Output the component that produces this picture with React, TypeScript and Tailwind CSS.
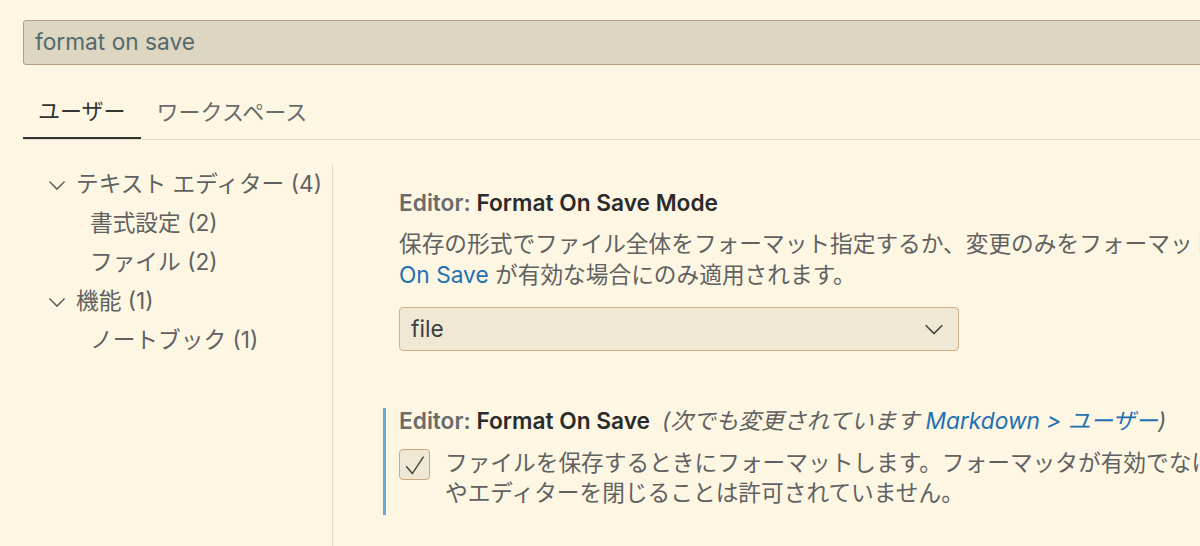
import React from "react";

const font = "font-['Inter','Noto_Sans_CJK_JP',sans-serif]";

function Chevron({ className }: { className?: string }) {
  return (
    <svg viewBox="0 0 16 16" className={className} fill="none" stroke="currentColor" strokeWidth="1.1">
      <path d="M2.5 5.5L8 11l5.5-5.5" />
    </svg>
  );
}

function TreeRow({ label, count, depth }: { label: string; count: number; depth: number }) {
  return (
    <div className="flex items-center h-[39px] whitespace-nowrap text-[#616161]">
      {depth === 0 ? (
        <>
          <Chevron className="w-[22px] h-[22px] ml-[23px] mr-[8px] shrink-0 text-[#616161]" />
          <span>
            {label} ({count})
          </span>
        </>
      ) : (
        <span className="ml-[67px]">
          {label} ({count})
        </span>
      )}
    </div>
  );
}

export default function App() {
  return (
    <div className={`w-[1200px] h-[546px] overflow-hidden bg-[#fdf6e3] text-[22.7px] ${font}`}>
      <div className="pt-[20px] pl-[23px]">
        <div className="w-[1200px] h-[45px] flex items-center pl-[11px] bg-[#ddd6c1] border border-[#b49e83] rounded-[3px] text-[#546a6d]">
          format on save
        </div>

        <div className="mt-[20px] flex w-[1200px] border-b border-[#e4ddca] text-[22px]">
          <div className="h-[54px] px-[15px] flex items-center -mb-px border-b-2 border-[#333333] text-[#333333]">
            ユーザー
          </div>
          <div className="h-[54px] px-[16px] flex items-center text-[#6b6b6b]">
            ワークスペース
          </div>
        </div>

        <div className="flex mt-[25px]">
          <div className="w-[310px] h-[400px] border-r border-[#e0d9c5] shrink-0">
            <TreeRow label="テキスト エディター" count={4} depth={0} />
            <TreeRow label="書式設定" count={2} depth={1} />
            <TreeRow label="ファイル" count={2} depth={1} />
            <TreeRow label="機能" count={1} depth={0} />
            <TreeRow label="ノートブック" count={1} depth={1} />
          </div>

          <div className="pl-[66px] pt-[22px] whitespace-nowrap">
            <div className="leading-[31px] font-semibold">
              <span className="text-[#6b6b6b]">Editor: </span>
              <span className="text-[#2b2b2b]">Format On Save Mode</span>
            </div>
            <div className="mt-[10px] leading-[31px] text-[#616161]">
              <div>
                保存の形式でファイル全体をフォーマット指定するか、変更のみをフォーマット指定するかを制御します。
                <span className="text-[#2271b1]">Editor: Format</span>
              </div>
              <div>
                <span className="text-[#2271b1]">On Save</span> が有効な場合にのみ適用されます。
              </div>
            </div>
            <div className="mt-[17px] w-[560px] h-[44px] flex items-center justify-between pl-[11px] pr-[12px] bg-[#eee8d5] border border-[#d3af86] rounded-[4px] text-[#3d3d3d]">
              <span>file</span>
              <Chevron className="w-[24px] h-[24px] text-[#444444]" />
            </div>

            <div className="mt-[57px] -ml-[16px] pl-[13px] pb-[7px] border-l-[3px] border-[#64aadc]">
              <div className="leading-[26px]">
                <span className="font-semibold text-[#6b6b6b]">Editor: </span>
                <span className="font-semibold text-[#2b2b2b]">Format On Save</span>
                <span className="ml-[12px] italic text-[#616161]">
                  (次でも変更されています <span className="text-[#2271b1]">Markdown &gt; ユーザー</span>)
                </span>
              </div>
              <div className="mt-[14px] flex items-start">
                <div className="w-[31px] h-[31px] mt-px shrink-0 flex items-center justify-center bg-[#eee8d5] border border-[#cfa779] rounded-[4px]">
                  <svg viewBox="0 0 16 16" className="w-[29px] h-[29px]" fill="none" stroke="#444444" strokeWidth="0.8">
                    <path d="M3.4 9l3.4 4L13 3.6" />
                  </svg>
                </div>
                <div className="ml-[15px] leading-[30px] text-[#616161]">
                  <div>
                    ファイルを保存するときにフォーマットします。フォーマッタが有効でなければなりません。ファイルの遅延保存
                  </div>
                  <div>やエディターを閉じることは許可されていません。</div>
                </div>
              </div>
            </div>
          </div>
        </div>
      </div>
    </div>
  );
}
